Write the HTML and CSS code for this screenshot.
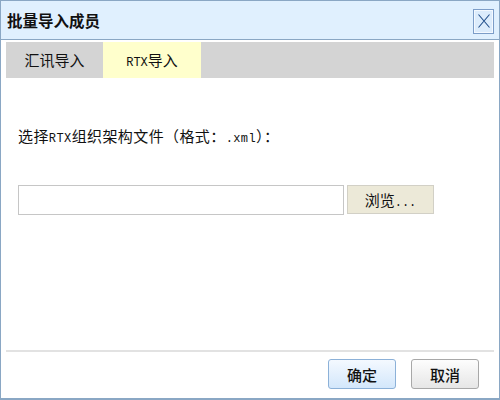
FILE: index.html
```html
<!DOCTYPE html>
<html>
<head>
<meta charset="utf-8">
<link rel="stylesheet" href="styles.css">
</head>
<body>
<div class="dialog">
  <div class="titlebar">
    <span class="title">批量导入成员</span>
    <button class="close" aria-label="关闭">
      <svg width="12" height="14" viewBox="0 0 12 14"><path d="M0.5 0.5 L11.5 13.5 M11.5 0.5 L0.5 13.5" stroke="#23508c" stroke-width="1.1" fill="none"/></svg>
    </button>
  </div>
  <div class="content">
    <div class="tabs">
      <div class="tab"><span class="tabtext">汇讯导入</span></div>
      <div class="tab active"><span class="tabtext"><span class="latin">RTX</span>导入</span></div>
    </div>
    <div class="panel">
      <div class="label">选择<span class="latin">RTX</span>组织架构文件（格式：<span class="latin">.xml</span>）：</div>
      <div class="filerow">
        <input class="file" type="text">
        <button class="browse">浏览<span class="latin">...</span></button>
      </div>
    </div>
    <div class="footer">
      <button class="btn primary">确定</button>
      <button class="btn">取消</button>
    </div>
  </div>
</div>
</body>
</html>
```

FILE: styles.css
```css
html, body {
  margin: 0;
  padding: 0;
  background: #fff;
}
body {
  font-family: "Noto Sans CJK SC", sans-serif;
  color: #111;
}
.dialog {
  box-sizing: border-box;
  width: 500px;
  height: 400px;
  border: 1px solid #8aa7c4;
  border-bottom-width: 2px;
  display: flex;
  flex-direction: column;
  background: #fff;
}
.titlebar {
  height: 38px;
  flex: none;
  background: #e0f0fe;
  border-bottom: 1px solid #8aa7c4;
  display: flex;
  align-items: center;
  justify-content: space-between;
  padding: 0 5px 0 6px;
}
.title {
  font-size: 15.5px;
  font-weight: bold;
  color: #111;
  line-height: 20px;
}
.close {
  box-sizing: border-box;
  width: 21px;
  height: 25px;
  margin-top: 2px;
  padding: 0;
  border: 1px solid #7c9dc8;
  box-shadow: inset 0 0 0 1px #f4f9ff;
  background: #dcecfc;
  display: flex;
  align-items: center;
  justify-content: center;
}
.content {
  flex: 1;
  display: flex;
  flex-direction: column;
  padding: 0 5px;
}
.tabs {
  margin-top: 2px;
  height: 36px;
  background: #d4d4d4;
  display: flex;
}
.tab {
  width: 97px;
  display: flex;
  align-items: center;
  justify-content: center;
  font-size: 15px;
  color: #111;
}
.tabtext {
  line-height: 20px;
}
.tab.active {
  width: 98px;
  background: #ffffcc;
}
.latin {
  font-family: "Liberation Mono", monospace;
  font-size: 12px;
  line-height: 1;
}
.panel {
  flex: 1;
  padding: 48px 0 0 12px;
}
.label {
  font-size: 15px;
  line-height: 20px;
  height: 20px;
  color: #111;
  white-space: nowrap;
  letter-spacing: 0.4px;
}
.filerow {
  margin-top: 39px;
  display: flex;
  gap: 3px;
}
.file {
  box-sizing: border-box;
  width: 326px;
  height: 30px;
  margin: 0;
  border: 1px solid #c6c6c6;
  background: #fff;
}
.browse {
  box-sizing: border-box;
  width: 87px;
  height: 29px;
  margin: 0;
  border: 1px solid #d2d0c6;
  background: #ece9d8;
  font-family: "Noto Sans CJK SC", sans-serif;
  font-size: 15px;
  color: #111;
  padding: 0;
}
.footer {
  border-top: 2px solid #e2e2e2;
  padding: 7px 15px 9px 0;
  display: flex;
  justify-content: flex-end;
  gap: 15px;
}
.btn {
  box-sizing: border-box;
  width: 68px;
  height: 30px;
  margin: 0;
  padding: 0;
  border: 1px solid #a8a8a8;
  border-radius: 3px;
  background: linear-gradient(#fdfdfd, #e6e6e6);
  font-family: "Noto Sans CJK SC", sans-serif;
  font-size: 15px;
  font-weight: 500;
  color: #111;
}
.btn.primary {
  border-color: #8cb1d8;
  background: linear-gradient(#f4f9ff, #d3e7fb);
}
```
